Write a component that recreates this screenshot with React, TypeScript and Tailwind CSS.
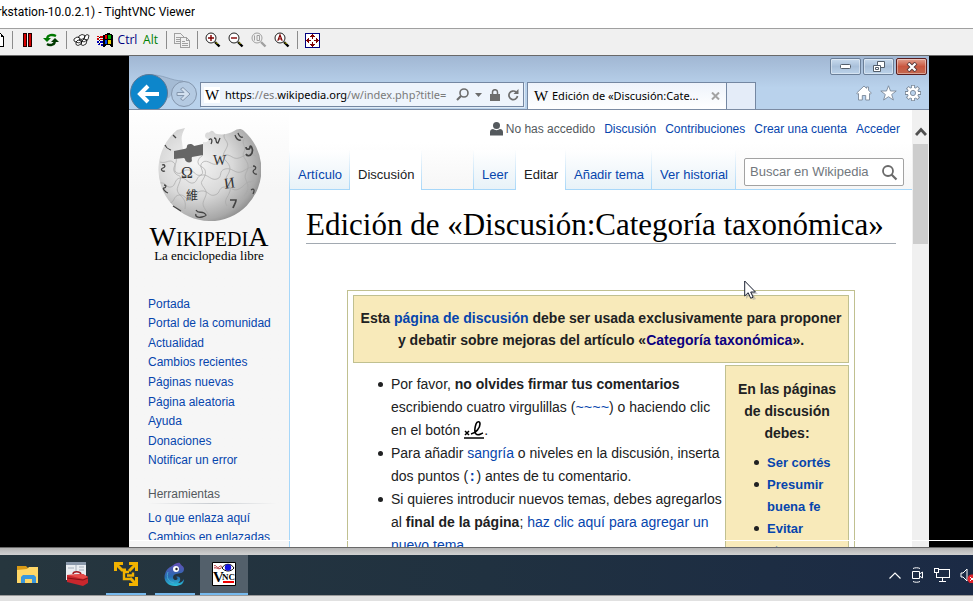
import type { ReactNode } from "react";

const ui = "font-['Open_Sans','Noto_Sans',sans-serif]";
const link = "text-[#0645ad] hover:underline";
const dot = "before:mr-2 before:-ml-[13px] before:inline-block before:size-[5px] before:rounded-full before:bg-[#202122] before:align-[2px]";

function Sep() {
  return (
    <div className="flex w-2 shrink-0 justify-center">
      <div className="h-[18px] w-px bg-[#8c8c8c]" />
    </div>
  );
}

function ToolButton({ label, children }: { label: string; children: ReactNode }) {
  return (
    <button aria-label={label} className="flex h-[23px] w-[23px] shrink-0 items-center justify-center text-xs leading-4">
      {children}
    </button>
  );
}

function Magnifier({ kind }: { kind: "in" | "out" | "one" | "auto" }) {
  const off = kind === "one";
  const ring = off ? "#a0a0a0" : "#202020";
  const mark = off ? "#a0a0a0" : "#800000";
  return (
    <svg width="16" height="16" viewBox="0 0 16 16" fill="none">
      <path d="M10 10l4.500 4.500" stroke={off ? "#a0a0a0" : "#000"} strokeWidth="2.400" />
      {!off && <path d="M11 10.400l1.600 1.600" stroke="#d8d800" strokeWidth="1" />}
      <circle cx="6" cy="6" r="5" stroke={ring} fill={off ? "#f0f0f0" : "#fff"} strokeWidth="1" />
      {kind === "in" && <path d="M3 6h6M6 3v6" stroke={mark} strokeWidth="1.400" />}
      {kind === "out" && <path d="M3 6h6" stroke={mark} strokeWidth="1.400" />}
      {kind === "one" && <path d="M3.500 3.500v5M6 3.500h2.500v5H6z" stroke={mark} strokeWidth="1" />}
      {kind === "auto" && <path d="M3.800 8.800L6 3l2.200 5.800M4.500 7h3" stroke={mark} strokeWidth="1.200" />}
    </svg>
  );
}

function Toolbar() {
  return (
    <div role="toolbar" className={`flex h-7 shrink-0 items-center overflow-hidden border-t border-b border-t-[#a0a0a0] border-b-[#696969] bg-[#f0f0f0] pb-1 ${ui}`}>
      <button aria-label="Nueva conexión" className="w-2 shrink-0">
        <svg width="5" height="14" viewBox="0 0 5 14" shapeRendering="crispEdges">
          <path d="M0 0h1v1h1v1h1v1h1v11H0z" fill="#000" />
          <path d="M0 1h1v3h2v9H0z" fill="#fff" />
        </svg>
      </button>
      <Sep />
      <ToolButton label="Pausa">
        <svg width="9" height="14" viewBox="0 0 9 14" shapeRendering="crispEdges">
          <path d="M0 0h4v14H0zM5 0h4v14H5z" fill="#200000" />
          <path d="M1 1h2v12H1zM6 1h2v12H6z" fill="#d80000" />
        </svg>
      </ToolButton>
      <ToolButton label="Actualizar">
        <svg width="16" height="14" viewBox="0 0 16 14" fill="none">
          <path d="M4 5c1-3 5-4 9-2" stroke="#007800" strokeWidth="2.400" />
          <path d="M0 5h8L4 9z" fill="#007800" />
          <path d="M12 9c-1 3-5 4-8 2" stroke="#003800" strokeWidth="2.400" />
          <path d="M16 9H8l4-4z" fill="#003800" />
        </svg>
      </ToolButton>
      <Sep />
      <ToolButton label="Ctrl Alt Supr">
        <svg width="17" height="12" viewBox="0 0 17 12">
          <g fill="#fff" stroke="#000" strokeWidth=".8">
            <path d="M6 2l3-1.500 3 1-1 3-3 1-3-1zM12 2l2-1.500 2 1-1 4-2 1-2-1z" />
            <path d="M1 5l3-2 3 1-1 3-3 1-2-1z" />
            <path d="M3 8l2-2 4 1-1 3-3 1.500-2-1zM9 7l2-2 3 1-1 4-3 1.500-2-1z" />
            <path d="M3 8l3 1 3-2M9 7l2 1 3-2" fill="none" />
          </g>
        </svg>
      </ToolButton>
      <ToolButton label="Ctrl Esc">
        <svg width="16" height="14" viewBox="0 0 16 14" shapeRendering="crispEdges">
          <path d="M6 2h2V1h2V0h3v1h2v1h1v12h-2v-1h-1v-1H9v1H8v1H6z" fill="#000" />
          <path d="M8 2h2v4H8z" fill="#f00000" />
          <path d="M11 2h3v4h-3z" fill="#00b000" />
          <path d="M8 7h2v4H8z" fill="#0040f0" />
          <path d="M11 7h3v4h-3z" fill="#e8d000" />
          <path d="M0 3h2v1H0zM3 3h3v2H3zM0 5h2v2H0zM3 6h3v1H3z" fill="#d00000" />
          <path d="M0 8h2v2H0zM3 8h3v2H3zM1 11h2v1H1zM4 11h2v2H4z" fill="#0000c0" />
          <path d="M2 4h1v1H2zM2 7h1v1H2zM2 10h1v1H2z" fill="#000" />
        </svg>
      </ToolButton>
      <ToolButton label="Ctrl"><span className="text-[#000080]">Ctrl</span></ToolButton>
      <ToolButton label="Alt"><span className="text-[#008000]">Alt</span></ToolButton>
      <Sep />
      <ToolButton label="Transferir archivos">
        <svg width="16" height="15" viewBox="0 0 16 15" fill="#f0f0f0" stroke="#a0a0a0" shapeRendering="crispEdges">
          <path d="M.5.5h6l3 3v7h-9zM2 4.500h4M2 6.500h5M2 8.500h5" />
          <path d="M6.500 4.500h6l3 3v7h-9zM12.500 4.500v3h3M8 8.500h3M8 10.500h6M8 12.500h6" />
        </svg>
      </ToolButton>
      <Sep />
      <ToolButton label="Acercar"><Magnifier kind="in" /></ToolButton>
      <ToolButton label="Alejar"><Magnifier kind="out" /></ToolButton>
      <ToolButton label="Tamaño real"><Magnifier kind="one" /></ToolButton>
      <ToolButton label="Ajuste automático"><Magnifier kind="auto" /></ToolButton>
      <Sep />
      <ToolButton label="Pantalla completa">
        <svg width="15" height="15" viewBox="0 0 15 15" shapeRendering="crispEdges">
          <path d="M.5.5h14v14H.5z" fill="#fff" stroke="#000080" />
          <path d="M7 1h1v1h1v1h1v1H8v2H7V4H5V3h1V2h1zM7 9h1v2h2v1H9v1H8v1H7v-1H6v-1H5v-1h2zM1 7h1V6h1V5h1v2h2v1H4v2H3V9H2V8H1zM9 7h2V5h1v1h1v1h1v1h-1v1h-1v1h-1V8H9z" fill="#800000" />
        </svg>
      </ToolButton>
    </div>
  );
}

function WindowButton({ label, danger, children }: { label: string; danger?: boolean; children: ReactNode }) {
  const tone = danger
    ? "border-[#5b1d1d] from-[#e0a08f] via-[#c9563f] to-[#c2684f]"
    : "border-[#6b7f98] from-[#c9dbee] via-[#a9c0da] to-[#bcd3ea]";
  return (
    <button aria-label={label} className={`flex h-[17px] w-[31px] items-center justify-center rounded-xs border bg-linear-to-b ring-1 ring-white/40 ring-inset ${tone}`}>
      {children}
    </button>
  );
}

function BrowserChrome() {
  return (
    <header className="flex h-[54px] shrink-0 items-end border-b border-[#7b8ba3] bg-linear-to-b from-[#a1b7d3] to-[#b9d2ec] to-60% font-['Noto_Sans','Open_Sans',sans-serif] text-[11px] leading-4">
      <svg className="shrink-0" width="71" height="35" viewBox="0 0 71 35">
        <path d="M20 1c14-1 22 6 34 6L40 24 20 30z" fill="#a5bbd4" />
        <path d="M20 1c14-1 22 6 34 6" fill="none" stroke="#8196b0" strokeWidth=".7" />
        <circle cx="55" cy="20" r="12.500" fill="#b4cae2" stroke="#8496ad" />
        <circle cx="20" cy="19" r="18.500" fill="#0d86cb" stroke="#5a7896" />
        <path d="M30 20H12M19 12l-8 8 8 8" fill="none" stroke="#fff" strokeWidth="4" />
        <path d="M48 18.500h7l-3.500-3.500 2.500-1.500 7 6.500-7 6.500-2.500-1.500 3.500-3.500h-7z" fill="#d2e0ef" stroke="#8496ad" />
      </svg>
      <div className="mb-[2px] flex h-[25px] min-w-0 flex-[0_1_324px] items-center gap-1 border border-[#7487a2] bg-[#eef4fc] pr-1 pl-[3px] shadow-[1px_1px_0_#dfeaf6]">
        <span className="flex h-4 w-4 shrink-0 items-center justify-center bg-white font-['Liberation_Serif',serif] text-[15px] leading-4 text-black">W</span>
        <p aria-label="Dirección" className="min-w-0 flex-1 pl-px whitespace-nowrap text-[#7a7a7a]">
          <span className="text-black">https</span>://es.<span className="text-black">wikipedia.org</span>/w/index.php?title=
        </p>
        <div className="flex shrink-0 items-center gap-2 text-[#6d6d6d]">
          <button aria-label="Buscar" className="flex items-center gap-[6px]">
            <svg width="13" height="13" viewBox="0 0 13 13" fill="none" stroke="currentColor">
              <circle cx="8" cy="5" r="4" strokeWidth="1.600" />
              <path d="M5 8L1 12" strokeWidth="2.200" />
            </svg>
            <svg width="7" height="4" viewBox="0 0 7 4"><path d="M0 0h7L3.500 4z" fill="currentColor" /></svg>
          </button>
          <svg width="10" height="12" viewBox="0 0 10 12"><path d="M0 5h10v7H0z" fill="currentColor" /><path d="M2.500 5V3a2.500 2.300 0 015 0v2" fill="none" stroke="currentColor" strokeWidth="1.500" /></svg>
          <button aria-label="Actualizar página">
            <svg width="11" height="12" viewBox="0 0 11 12"><path d="M9.500 7A4.300 4.300 0 118 3" fill="none" stroke="currentColor" strokeWidth="1.700" /><path d="M10.500 0v5h-5z" fill="currentColor" /></svg>
          </button>
        </div>
      </div>
      <div className="ml-[3px] flex h-[27px] min-w-0 flex-[0_1_200px] items-center gap-[3px] border border-b-0 border-[#7487a2] bg-linear-to-b from-[#eef3fb] to-white pr-[6px] pl-[5px]">
        <span className="w-4 shrink-0 text-center font-['Liberation_Serif',serif] text-[15px] text-black">W</span>
        <span className="flex-1 whitespace-nowrap text-black">Edición de «Discusión:Cate...</span>
        <button aria-label="Cerrar pestaña">
          <svg width="9" height="8" viewBox="0 0 9 8"><path d="M1 0.500l7 7M8 .5l-7 7" stroke="#a3a3a3" strokeWidth="2" /></svg>
        </button>
      </div>
      <button aria-label="Nueva pestaña" className="h-[27px] w-[29px] shrink-0 border border-b-0 border-l-0 border-[#7487a2] bg-[#e4ecf8]" />
      <div className="flex h-full flex-1 flex-col items-end justify-between pt-[2px] pr-[2px] pb-2">
        <div className="flex gap-[2px]">
          <WindowButton label="Minimizar">
            <svg width="11" height="5" viewBox="0 0 11 5"><rect x=".5" y=".5" width="10" height="4" rx="1" fill="#fff" stroke="#535e6b" /></svg>
          </WindowButton>
          <WindowButton label="Restaurar">
            <svg width="12" height="11" viewBox="0 0 12 11" fill="#fff" stroke="#535e6b"><path d="M4.500.5h7v6h-7z" /><path d="M.5 4.500h7v6h-7zM2.500 6.500h3v2h-3z" /></svg>
          </WindowButton>
          <WindowButton label="Cerrar" danger>
            <svg width="12" height="10" viewBox="0 0 12 10"><path d="M2 1l8 8M10 1L2 9" stroke="#5a3a3a" strokeWidth="4" /><path d="M2.500 1.500l7 7M9.500 1.500l-7 7" stroke="#fff" strokeWidth="2.200" /></svg>
          </WindowButton>
        </div>
        <div className="flex gap-2 pr-[6px]">
          <button aria-label="Inicio">
            <svg width="16" height="16" viewBox="0 0 16 16"><path d="M8 1l2.500 2.300V2h2v3.200L15.300 8l-1 1.200-.8-.6V15H9.700v-4.500H6.300V15H2.500V8.600l-.8.600-1-1.200z" fill="#fff" stroke="#7a8898" strokeWidth=".9" /></svg>
          </button>
          <button aria-label="Favoritos">
            <svg width="17" height="16" viewBox="0 0 17 16"><path d="M8.500.8l2 5.200h5.700l-4.500 3.500 1.700 5.500-4.900-3.300L3.600 15l1.700-5.500L.8 6h5.700z" fill="#fff" stroke="#7a8898" strokeWidth=".9" /></svg>
          </button>
          <button aria-label="Herramientas">
            <svg width="16" height="16" viewBox="0 0 16 16" fill="none">
              <path d="M8 0v16M0 8h16M2.300 2.300l11.400 11.400M13.700 2.300L2.300 13.700" stroke="#7a8898" strokeWidth="3.800" />
              <circle cx="8" cy="8" r="6" fill="#7a8898" />
              <path d="M8 .8v14.400M.8 8h14.400M2.900 2.900l10.200 10.200M13.100 2.900L2.900 13.100" stroke="#fff" strokeWidth="2.200" />
              <circle cx="8" cy="8" r="5.200" fill="#fff" />
              <circle cx="8" cy="8" r="2.600" fill="#b9d2ec" stroke="#7a8898" strokeWidth=".9" />
            </svg>
          </button>
        </div>
      </div>
    </header>
  );
}

const ball = "M20 2l8-2c-3 6-4 9-3 14l1 8 20-3v-5c4 1 6-1 5-3-3-1-4-3-2-6 2-1 3 0 5-2 3-1 3 3 6 3 6 1 12 0 17-3 3-2 7-3 10 0A51.500 51.500 0 1120 2z";

function Globe() {
  return (
    <svg className="h-[94px] w-[104px]" viewBox="0 0 104 94" fontFamily="Liberation Serif, Noto Sans CJK SC, serif" fill="#333">
      <defs>
        <radialGradient id="ball" cx=".36" cy=".38" r=".72">
          <stop offset="0" stopColor="#f6f6f6" />
          <stop offset=".5" stopColor="#d9d9d9" />
          <stop offset=".85" stopColor="#a8a8a8" />
          <stop offset="1" stopColor="#808080" />
        </radialGradient>
        <clipPath id="ballClip"><path d={ball} /></clipPath>
      </defs>
      <path d={ball} fill="url(#ball)" />
      <g fill="none" stroke="#a9a9a9" strokeWidth=".7" clipPath="url(#ballClip)">
        <path d="M3 34c6 2 9-3 13 0 5 3-1 9 4 11s6-4 12-3 7 7 12 5c5-3-4-9 2-13 5-3 9 4 14 2s2-8 8-9 8 5 14 3 9-6 17-2" />
        <path d="M3 55c6-1 6 5 11 4s3-8 9-9 8 6 13 5 3-7 9-8 9 6 15 4 1-8 8-10 10 5 16 3 6-6 18-5" />
        <path d="M13 75c5-1 3-7 9-8s7 6 13 5 2-8 9-9 8 6 14 4 3-7 9-8 9 5 15 2 5-7 15-8" />
        <path d="M19 30c2 6-5 9-1 15 3 4 7 1 5 8-2 6-5 9 0 14s6 7 5 14M46 27c-6 4-7 9-1 12s3 10 0 14 6 8 4 14-5 8-1 14 5 8 3 11M68 5c-4 6 5 8 2 14s-6 9-1 14 5 9 1 15 5 8 3 15-7 9-3 15M88 10c-5 4 2 9-1 14s3 7 4 13-5 9-2 15 3 10-2 16" />
      </g>
      <path d="M17 23l10-2c2 0 3-1 3-3s5-3 7 0l9-2v11l-11 2c-1 2 1 4-1 5s-6 0-6-3l-1-1-10 1z" fill="#666" />
      <text x="24" y="50" fontSize="16">Ω</text>
      <text x="56" y="37" fontSize="14">W</text>
      <text x="67" y="60" fontSize="15" transform="rotate(-8 73 55)">И</text>
      <text x="29" y="72" fontSize="12">維</text>
      <g fill="none" stroke="#444" strokeWidth="1.300">
        <path d="M73 72h6c0 3-2 5-3 8M89 19c0 3 4 3 4 0s4 2 2 6-5 3-6 1" strokeWidth="1.700" />
        <path d="M8 17c2 4 3 4 6 5M16 7l3 3M5 37c3-1 4 2 1 3s-1 4 2 3M7 57c3 0 2 3 0 3s1 4 4 5M16 78l8 5M39 82c2 4 5 1 8 3s3 3-2 4-7-1-6-3M94 62c3-2 4 0 2 4M96 38c4 0 3 3 1 4s0 5 3 4M78 7c1 3 3 6 6 5M81 5c1 3 3 5 5 4M52 12c2-3 4 0 2 4M57 10c4 0 0 4 4 5l2-5" />
      </g>
    </svg>
  );
}

const navItems = ["Portada", "Portal de la comunidad", "Actualidad", "Cambios recientes", "Páginas nuevas", "Página aleatoria", "Ayuda", "Donaciones", "Notificar un error"];

function Sidebar() {
  return (
    <aside className="w-40 shrink-0 bg-linear-to-b from-white to-[#f6f6f6] to-[80px] text-xs leading-4">
      <a href="#portada" className="flex flex-col items-center pt-[18px] text-black">
        <Globe />
        <span className="mt-1 font-['Liberation_Serif',serif] text-xl leading-[21px] whitespace-nowrap">
          <span className="text-[28px]">W</span>IKIPEDI<span className="text-[28px]">A</span>
        </span>
        <span className="font-['Liberation_Serif',serif] text-[13px] leading-3">La enciclopedia libre</span>
      </a>
      <nav className="pt-[32px] pl-[19px]">
        <ul className="flex h-44 flex-col">
          {navItems.map((t) => (
            <li key={t} className="flex flex-1 items-center whitespace-nowrap"><a href="#nav" className={link}>{t}</a></li>
          ))}
        </ul>
        <h3 className="mt-4 mr-3 pb-[1px] text-[#54595d]">Herramientas</h3>
        <div className="mr-3 h-px bg-linear-to-r from-transparent via-[#c8ccd1] to-transparent" />
        <ul className="mt-1 whitespace-nowrap">
          <li className="py-[2px]"><a href="#enlaza" className={link}>Lo que enlaza aquí</a></li>
          <li className="py-px"><a href="#cambios" className={link}>Cambios en enlazadas</a></li>
        </ul>
      </nav>
    </aside>
  );
}

function Tab({ label, selected }: { label: string; selected?: boolean }) {
  return (
    <li className="flex h-10 bg-linear-to-b from-transparent to-[#a7d7f9] pr-px">
      <a
        href="#tab"
        className={`flex items-end pr-[7px] pl-2 text-[13px] leading-4 whitespace-nowrap ${
          selected ? "bg-white pb-[7px] text-[#202122]" : "border-b border-[#a7d7f9] bg-linear-to-b from-white to-[#e8f2f8] pb-[6px] text-[#0645ad]"
        }`}
      >
        {label}
      </a>
    </li>
  );
}

function PageHead() {
  return (
    <div className="flex h-20 flex-col justify-between bg-linear-to-b from-white from-40% to-[#f6f6f6]">
      <ul className="flex items-center justify-end gap-[9px] pt-[11px] pr-3 text-xs leading-4 whitespace-nowrap">
        <li className="flex items-center gap-[3px] text-[#54595d]">
          <svg width="13" height="14" viewBox="0 0 13 14" fill="#54595d"><circle cx="6.500" cy="3.500" r="3.500" /><path d="M0 13.500V10c0-2 1.500-3 3-3 2 1.500 5 1.500 7 0 1.500 0 3 1 3 3v3.500z" /></svg>
          No has accedido
        </li>
        {["Discusión", "Contribuciones", "Crear una cuenta", "Acceder"].map((t) => (
          <li key={t}><a href="#user" className={link}>{t}</a></li>
        ))}
      </ul>
      <div className="flex h-10 items-stretch">
        <ul className="flex"><Tab label="Artículo" /><Tab label="Discusión" selected /></ul>
        <div className="flex-1 border-b border-[#a7d7f9]" />
        <ul className="flex">
          <li className="w-px bg-linear-to-b from-transparent to-[#a7d7f9]" />
          <Tab label="Leer" /><Tab label="Editar" selected /><Tab label="Añadir tema" /><Tab label="Ver historial" />
        </ul>
        <form className="border-b border-[#a7d7f9] px-2 pt-2" onSubmit={(e) => e.preventDefault()}>
          <div className="flex h-7 w-40 items-center rounded-xs border border-[#a2a2a2] bg-white px-[5px]">
            <label htmlFor="search" className="sr-only">Buscar en Wikipedia</label>
            <input id="search" placeholder="Buscar en Wikipedia" className="min-w-0 flex-1 text-[13px] leading-4 outline-none placeholder:text-[#72777d]" />
            <button aria-label="Buscar">
              <svg width="17" height="17" viewBox="0 0 17 17" fill="none" stroke="#6a6a6a"><circle cx="7" cy="7" r="5" strokeWidth="1.800" /><path d="M10.500 10.500l5 5" strokeWidth="2.200" /></svg>
            </button>
          </div>
        </form>
      </div>
    </div>
  );
}

function Notice() {
  return (
    <section className="mx-auto mt-[46px] max-w-[508px] border border-[#c0c090] p-[5px] pt-1 text-sm text-[#202122]">
      <p className="border border-[#c0c090] bg-[#f8eaba] py-[11px] text-center leading-[22px] font-bold">
        Esta <a href="#discusion" className={link}>página de discusión</a> debe ser usada exclusivamente para proponer<br />
        y debatir sobre mejoras del artículo «<a href="#categoria" className="text-[#0b0080]">Categoría taxonómica</a>».
      </p>
      <div className="mt-[2px] flex">
        <ul className="min-w-0 flex-1 pt-2 pl-[38px] leading-[23px]">
          <li className={dot}>Por favor, <b>no olvides firmar tus comentarios</b> escribiendo cuatro virgulillas (<code className="font-['Liberation_Mono',monospace] text-sm leading-none text-[#0645ad]">~~~~</code>) o haciendo clic<br />
            en el botón{" "}
            <svg className="inline-block align-[-4px]" width="20" height="19" viewBox="0 0 20 19" fill="none" stroke="#000">
              <path d="M1 11l4 4M5 11l-4 4" strokeWidth="1.500" />
              <path d="M7 14c5-1 9-6 9-10 0-3-3-3-4 0s-2 8 0 10 4 0 7-1" strokeWidth="1.600" />
              <path d="M0 18h20" strokeWidth="1.500" />
            </svg>.
          </li>
          <li className={dot}>Para añadir <a href="#sangria" className={link}>sangría</a> o niveles en la discusión, inserta dos puntos (<code className="font-['Liberation_Mono',monospace] text-sm leading-none font-bold text-[#0645ad]">:</code>) antes de tu comentario.</li>
          <li className={`mr-[-2px] ${dot}`}>Si quieres introducir nuevos temas, debes agregarlos al <b>final de la página</b>; <a href="#nuevo" className={link}>haz clic aquí para agregar un nuevo tema</a>.</li>
        </ul>
        <div className="ml-[3px] w-[124px] shrink-0 border border-[#c0c090] bg-[#f8eaba] px-2 pt-3 leading-[22px] font-bold">
          <p className="text-center">En las páginas de discusión debes:</p>
          <ul className="pt-2 pl-[33px] text-[13px]">
            <li className={dot}><a href="#cortes" className={link}>Ser cortés</a></li>
            <li className={dot}><a href="#fe" className={link}>Presumir buena fe</a></li>
            <li className={dot}><a href="#evitar" className={link}>Evitar ataques</a></li>
          </ul>
        </div>
      </div>
    </section>
  );
}

function Remote() {
  return (
    <main className="relative flex min-h-0 flex-1 overflow-hidden bg-black pl-[129px] pr-11">
      <div className="flex min-w-0 flex-1 flex-col overflow-hidden bg-white font-['Liberation_Sans',Arial,sans-serif]">
        <BrowserChrome />
        <div className="flex min-h-0 flex-1 overflow-hidden">
          <Sidebar />
          <div className="flex min-w-0 flex-1">
            <div className="w-px shrink-0 bg-linear-to-b from-transparent from-[40px] to-[#a7d7f9] to-[80px]" />
            <div className="min-w-0 flex-1">
              <PageHead />
              <article className="px-4">
                <h1 className="border-b border-[#a2a9b1] pt-[17px] font-['Liberation_Serif',serif] text-[31px] leading-9 whitespace-nowrap text-black">Edición de «Discusión:Categoría taxonómica»</h1>
                <Notice />
              </article>
            </div>
          </div>
          <div className="w-[17px] shrink-0 bg-[#f0f0f0] px-px">
            <button aria-label="Subir" className="flex h-[34px] w-full items-end justify-center pb-2">
              <svg width="12" height="9" viewBox="0 0 12 9"><path d="M1 8l5-5.500L11 8" fill="none" stroke="#505050" strokeWidth="2.800" /></svg>
            </button>
            <div className="h-[100px] bg-[#cdcdcd]" />
          </div>
        </div>
      </div>
      <div className="absolute right-0 bottom-[6px] left-[129px] h-px bg-white" />
      <svg className="absolute top-[224px] left-[744px]" width="14" height="21" viewBox="0 0 14 21">
        <path d="M2 2v17l4-4 3 5 3-1-3-5h5z" fill="#999" opacity=".5" />
        <path d="M.7 1v15l3.500-3.300 2.500 5.600 2.400-1.100L6.700 12h4.700z" fill="#fff" stroke="#1c2233" />
      </svg>
    </main>
  );
}

function TaskButton({ label, state, children }: { label: string; state?: "open" | "active"; children: ReactNode }) {
  return (
    <button aria-label={label} className={`flex h-10 w-12 flex-col items-center ${state === "active" ? "bg-[#53606b]" : ""}`}>
      <span className="flex h-[38px] items-center">{children}</span>
      {state && <span className={`h-[2px] bg-[#76b9ed] ${state === "active" ? "w-12" : "w-10"}`} />}
    </button>
  );
}

function Taskbar() {
  return (
    <footer className="flex h-[41px] shrink-0 items-start justify-between overflow-hidden border-b border-[#9a9a9a] bg-linear-to-r from-[#26363e] via-[#203140] to-[#1b2a45]">
      <div className="flex gap-px pl-1">
        <TaskButton label="Explorador de archivos">
          <svg width="22" height="19" viewBox="0 0 22 19">
            <path d="M0 1h9l2 2h10v4H0z" fill="#d99a16" /><path d="M0 5l10-1 2-2h9v16H0z" fill="#ffd767" />
            <path d="M4 18v-6l2-2h11l2 2v6h-4v-4H8v4z" fill="#3a97dd" />
          </svg>
        </TaskButton>
        <TaskButton label="Herramientas">
          <svg width="23" height="24" viewBox="0 0 23 24">
            <path d="M0 0h20v18H0z" fill="#e9edf1" /><path d="M0 0h20v3H0z" fill="#8998aa" /><path d="M10 3v6M13 5h5M13 8h5M2 6h6" stroke="#a5b0bc" />
            <path d="M1 13l16-1 5 3v6l-5 3-16-4z" fill="#c9272d" /><path d="M1 13l16-1 5 3-5 2z" fill="#e64a48" /><path d="M7 12c0-3 7-3 8 0" fill="none" stroke="#a01a20" strokeWidth="1.500" /><path d="M1 16l16 2 5-2" fill="none" stroke="#851216" />
          </svg>
        </TaskButton>
        <TaskButton label="VMware" state="open">
          <svg width="24" height="24" viewBox="0 0 24 24" fill="none" stroke="#f2b200" strokeWidth="3">
            <path d="M1.500 9V1.500H9M2 2l6 6h4M15 1.500h7.500V9M22 2l-7 7M22.500 15v7.500H15M22 22l-6-6" />
            <path d="M15 10h-5v7h6M13 13.500h6v-3" strokeWidth="2.400" />
          </svg>
        </TaskButton>
        <TaskButton label="GitKraken" state="open">
          <svg width="22" height="24" viewBox="0 0 22 24">
            <defs><linearGradient id="cham" x1="0" y1="0" x2="0" y2="1"><stop stopColor="#6550b8" /><stop offset=".6" stopColor="#276bb0" /><stop offset="1" stopColor="#2ac0d8" /></linearGradient></defs>
            <path d="M8 4c2-1 4-4 8-3 0 2 4 3 4 6 0 5-5 4-8 5-4 1-4 6 0 6 2 0 2-3 0-3 4-2 6 3 2 6 3 0 5-2 6-4 0 5-4 7-9 7C3 24-1 18 1 12c1-4 3-6 7-8z" fill="url(#cham)" />
            <circle cx="12" cy="7" r="3" fill="#fff" /><circle cx="12.500" cy="7" r="1.200" fill="#222" />
            <path d="M4 10c-2 5 0 10 6 11" fill="none" stroke="#47a7d2" />
          </svg>
        </TaskButton>
        <TaskButton label="TightVNC Viewer" state="active">
          <svg width="24" height="24" viewBox="0 0 24 24">
            <path d="M.5.5h23v23H.5z" fill="#fff" stroke="#000" />
            <path d="M2 4c2-2 3 3 5 1s3-1 3 1M2 6c3-1 4 2 7 0" fill="none" stroke="#b3262e" />
            <path d="M10 6c3-5 9-5 12 0-3 4-9 4-12 0z" fill="#fff" stroke="#000" /><circle cx="16" cy="5.500" r="3.200" fill="#1010e0" />
            <path d="M11 20h11" stroke="#f00000" strokeWidth="2" />
            <text x="1" y="20" fontFamily="Liberation Serif, serif" fontWeight="700" fontSize="15">V</text>
            <text x="10" y="17.500" fontFamily="Liberation Serif, serif" fontWeight="700" fontSize="9">NC</text>
          </svg>
        </TaskButton>
      </div>
      <div className="flex h-10 items-center gap-[10px]">
        <svg width="12" height="7" viewBox="0 0 12 7" fill="none" stroke="#fff"><path d="M.5 6.500L6 1l5.500 5.500" strokeWidth="1.200" /></svg>
        <svg width="13" height="16" viewBox="0 0 13 16" fill="none" stroke="#fff"><path d="M1.500 4.500h7v7h-7zM8.500 7L11.500 5v6L8.500 9M2 1.500c2-1 5-1 7 0M2 14.500c2 1 5 1 7 0" /></svg>
        <svg width="16" height="14" viewBox="0 0 16 14" fill="none" stroke="#fff" shapeRendering="crispEdges"><path d="M4.500 1.500h11v8h-13V5M.5.500h4v4h-4zM8.500 10v3M5 13.500h7" /></svg>
        <svg width="13" height="15" viewBox="0 0 13 15" fill="none" stroke="#fff"><path d="M1 5h2l4-4v12L3 9H1z" /><circle cx="12" cy="11" r="4.500" fill="#e0242c" stroke="none" /><path d="M10 9l4 4M14 9l-4 4" /></svg>
      </div>
    </footer>
  );
}

export default function App() {
  return (
    <div className="flex h-screen flex-col overflow-hidden bg-[#e1e1e1]">
      <div className="flex h-7 shrink-0 items-center bg-white pb-1">
        <h2 className="flex w-[195px] justify-end overflow-hidden font-['Roboto','Open_Sans',sans-serif] text-xs leading-5 whitespace-nowrap text-black">orkstation-10.0.2.1) - TightVNC Viewer</h2>
      </div>
      <Toolbar />
      <Remote />
      <div className="h-2 shrink-0 border-t border-[#696969] bg-linear-to-b from-[#b4b4b4] to-[#d2d2d2]" />
      <Taskbar />
      <div className="h-[5px] shrink-0" />
    </div>
  );
}
